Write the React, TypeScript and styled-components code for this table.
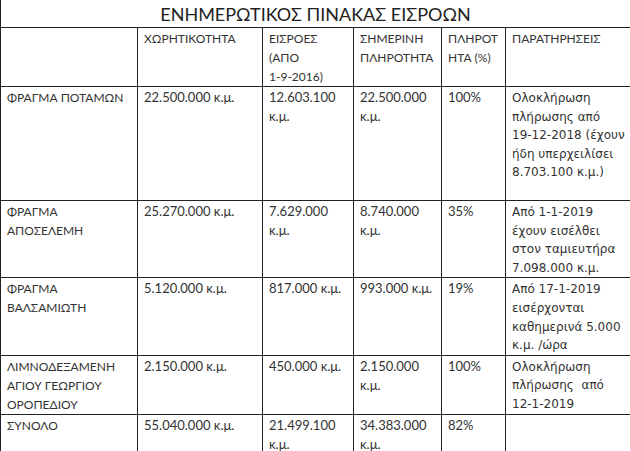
import styled, { createGlobalStyle } from 'styled-components';

const GlobalStyle = createGlobalStyle`
  html, body {
    margin: 0;
    padding: 0;
    background: #ffffff;
  }
`;

const Page = styled.div`
  width: 630px;
  font-family: 'Lato', 'Liberation Sans', sans-serif;
  color: #333;
`;

const Title = styled.h1`
  margin: 0;
  height: 27px;
  border-left: 1px solid #222;
  box-sizing: border-box;
  font-size: 18px;
  font-weight: 400;
  line-height: 28px;
  text-align: center;
  color: #222;
`;

const Table = styled.table`
  width: 630px;
  border-collapse: collapse;
  table-layout: fixed;
`;

const Row = styled.tr<{ $h: number }>`
  height: ${(p) => p.$h}px;
`;

type Kind = 'caps' | 'num' | 'note';

const fonts: Record<Kind, string> = {
  caps: "font-family: 'Lato', 'Liberation Sans', sans-serif; font-size: 12px; line-height: 19px; padding-top: 1px;",
  num: "font-family: 'Lato', 'Liberation Sans', sans-serif; font-size: 13px; line-height: 19px; padding-top: 1px;",
  note: "font-family: 'DejaVu Sans', 'Noto Sans', sans-serif; font-size: 12px; line-height: 18.6px; padding-top: 2px;",
};

const Cell = styled.td<{ $kind: Kind }>`
  border: 1px solid #222;
  vertical-align: top;
  padding: 0 6px;
  ${(p) => fonts[p.$kind]}
  white-space: pre;
  color: #333;
  overflow: hidden;
`;

const widths = [137, 125, 91, 88, 64, 125];

type RowData = { h: number; cells: string[] };

const rows: RowData[] = [
  {
    h: 59,
    cells: ['', 'ΧΩΡΗΤΙΚΟΤΗΤΑ', 'ΕΙΣΡΟΕΣ\n(ΑΠΟ\n1-9-2016)', 'ΣΗΜΕΡΙΝΗ\nΠΛΗΡΟΤΗΤΑ', 'ΠΛΗΡΟΤ\nΗΤΑ (%)', 'ΠΑΡΑΤΗΡΗΣΕΙΣ'],
  },
  {
    h: 114,
    cells: [
      'ΦΡΑΓΜΑ ΠΟΤΑΜΩΝ',
      '22.500.000 κ.μ.',
      '12.603.100\nκ.μ.',
      '22.500.000\nκ.μ.',
      '100%',
      'Ολοκλήρωση\nπλήρωσης από\n19-12-2018 (έχουν\nήδη υπερχειλίσει\n8.703.100 κ.μ.)',
    ],
  },
  {
    h: 77,
    cells: [
      'ΦΡΑΓΜΑ\nΑΠΟΣΕΛΕΜΗ',
      '25.270.000 κ.μ.',
      '7.629.000\nκ.μ.',
      '8.740.000\nκ.μ.',
      '35%',
      'Από 1-1-2019\nέχουν εισέλθει\nστον ταμιευτήρα\n7.098.000 κ.μ.',
    ],
  },
  {
    h: 76,
    cells: [
      'ΦΡΑΓΜΑ\nΒΑΛΣΑΜΙΩΤΗ',
      '5.120.000 κ.μ.',
      '817.000 κ.μ.',
      '993.000 κ.μ.',
      '19%',
      'Από 17-1-2019\nεισέρχονται\nκαθημερινά 5.000\nκ.μ. /ώρα',
    ],
  },
  {
    h: 59,
    cells: [
      'ΛΙΜΝΟΔΕΞΑΜΕΝΗ\nΑΓΙΟΥ ΓΕΩΡΓΙΟΥ\nΟΡΟΠΕΔΙΟΥ',
      '2.150.000 κ.μ.',
      '450.000 κ.μ.',
      '2.150.000\nκ.μ.',
      '100%',
      'Ολοκλήρωση\nπλήρωσης  από\n12-1-2019',
    ],
  },
  {
    h: 45,
    cells: ['ΣΥΝΟΛΟ', '55.040.000 κ.μ.', '21.499.100\nκ.μ.', '34.383.000\nκ.μ.', '82%', ''],
  },
];

function kindOf(ri: number, ci: number): Kind {
  if (ri === 0 || ci === 0) return 'caps';
  if (ci === 5) return 'note';
  return 'num';
}

export default function App() {
  return (
    <Page>
      <GlobalStyle />
      <Title>ΕΝΗΜΕΡΩΤΙΚΟΣ ΠΙΝΑΚΑΣ ΕΙΣΡΟΩΝ</Title>
      <Table>
        <colgroup>
          {widths.map((w, i) => (
            <col key={i} style={{ width: w }} />
          ))}
        </colgroup>
        <tbody>
          {rows.map((r, ri) => (
            <Row key={ri} $h={r.h}>
              {r.cells.map((c, ci) => (
                <Cell key={ci} $kind={kindOf(ri, ci)}>
                  {c}
                </Cell>
              ))}
            </Row>
          ))}
        </tbody>
      </Table>
    </Page>
  );
}
